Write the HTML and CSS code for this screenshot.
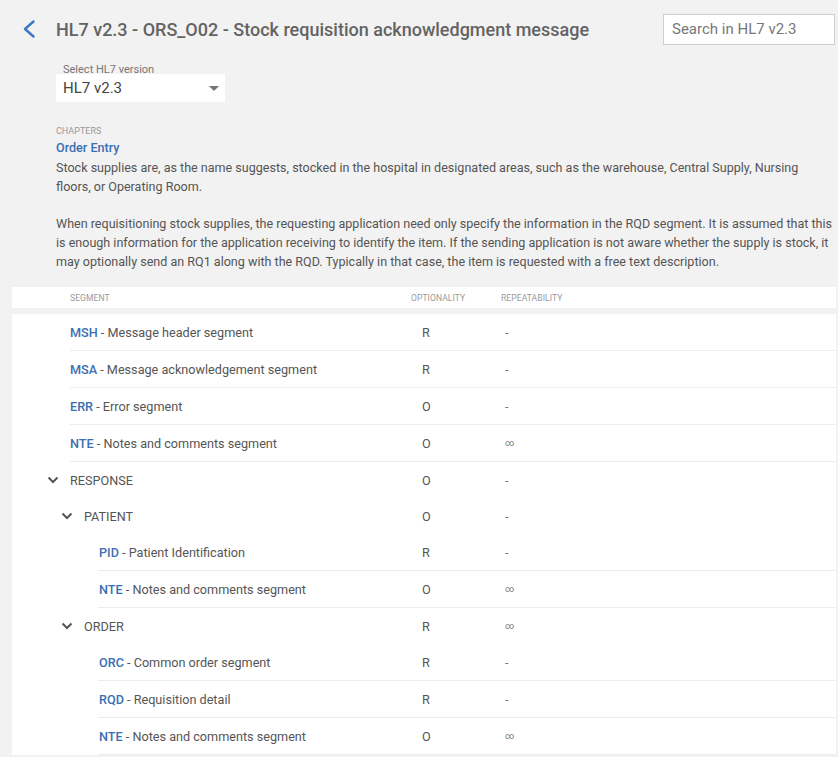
FILE: index.html
```html
<!DOCTYPE html>
<html lang="en">
<head>
<meta charset="utf-8">
<title>HL7 v2.3 - ORS_O02</title>
<link rel="stylesheet" href="styles.css">
</head>
<body>
<header class="topbar">
  <a class="back" href="#" aria-label="Back">
    <svg width="14" height="18" viewBox="0 0 14 18"><polyline points="11.5,1.5 3,9 11.5,16.5" fill="none" stroke="#3b78bf" stroke-width="2.4" stroke-linecap="round" stroke-linejoin="round"/></svg>
  </a>
  <h1 class="title">HL7 v2.3 - ORS_O02 - Stock requisition acknowledgment message</h1>
  <div class="search">Search in HL7 v2.3</div>
</header>

<section class="content">
  <div class="version">
    <div class="version-label">Select HL7 version</div>
    <div class="version-select">
      <span>HL7 v2.3</span>
      <svg class="caret" width="10" height="5" viewBox="0 0 10 5"><polygon points="0,0 10,0 5,5" fill="#757575"/></svg>
    </div>
  </div>

  <div class="chapters-label">CHAPTERS</div>
  <div class="chapter">Order Entry</div>
  <p class="desc">Stock supplies are, as the name suggests, stocked in the hospital in designated areas, such as the warehouse, Central Supply, Nursing floors, or Operating Room.</p>
  <p class="desc gap">When requisitioning stock supplies, the requesting application need only specify the information in the RQD segment. It is assumed that this is enough information for the application receiving to identify the item. If the sending application is not aware whether the supply is stock, it may optionally send an RQ1 along with the RQD. Typically in that case, the item is requested with a free text description.</p>
</section>

<div class="table">
  <div class="thead">
    <div class="th th-seg">SEGMENT</div>
    <div class="th th-opt">OPTIONALITY</div>
    <div class="th th-rep">REPEATABILITY</div>
  </div>
  <div class="tbody">
    <div class="row seg l1"><div class="c-seg"><b>MSH</b> - Message header segment</div><div class="c-opt">R</div><div class="c-rep">-</div></div>
    <div class="row seg l1"><div class="c-seg"><b>MSA</b> - Message acknowledgement segment</div><div class="c-opt">R</div><div class="c-rep">-</div></div>
    <div class="row seg l1"><div class="c-seg"><b>ERR</b> - Error segment</div><div class="c-opt">O</div><div class="c-rep">-</div></div>
    <div class="row seg l1"><div class="c-seg"><b>NTE</b> - Notes and comments segment</div><div class="c-opt">O</div><div class="c-rep inf">∞</div></div>

    <div class="row grp g1"><div class="c-seg"><span class="chev"><svg width="12" height="8" viewBox="0 0 12 8"><polyline points="1.5,1.5 6,6 10.5,1.5" fill="none" stroke="#555" stroke-width="2"/></svg></span>RESPONSE</div><div class="c-opt">O</div><div class="c-rep">-</div></div>
    <div class="row grp g2"><div class="c-seg"><span class="chev"><svg width="12" height="8" viewBox="0 0 12 8"><polyline points="1.5,1.5 6,6 10.5,1.5" fill="none" stroke="#555" stroke-width="2"/></svg></span>PATIENT</div><div class="c-opt">O</div><div class="c-rep">-</div></div>
    <div class="row seg l3"><div class="c-seg"><b>PID</b> - Patient Identification</div><div class="c-opt">R</div><div class="c-rep">-</div></div>
    <div class="row seg l3"><div class="c-seg"><b>NTE</b> - Notes and comments segment</div><div class="c-opt">O</div><div class="c-rep inf">∞</div></div>
    <div class="row grp g2"><div class="c-seg"><span class="chev"><svg width="12" height="8" viewBox="0 0 12 8"><polyline points="1.5,1.5 6,6 10.5,1.5" fill="none" stroke="#555" stroke-width="2"/></svg></span>ORDER</div><div class="c-opt">R</div><div class="c-rep inf">∞</div></div>
    <div class="row seg l3"><div class="c-seg"><b>ORC</b> - Common order segment</div><div class="c-opt">R</div><div class="c-rep">-</div></div>
    <div class="row seg l3"><div class="c-seg"><b>RQD</b> - Requisition detail</div><div class="c-opt">R</div><div class="c-rep">-</div></div>
    <div class="row seg l3"><div class="c-seg"><b>NTE</b> - Notes and comments segment</div><div class="c-opt">O</div><div class="c-rep inf">∞</div></div>
  </div>
</div>
</body>
</html>
```
FILE: styles.css
```css
html, body {
  margin: 0;
  padding: 0;
  background: #f2f2f2;
  font-family: Roboto, "Liberation Sans", Arial, sans-serif;
  color: #555;
}

.topbar {
  display: flex;
  align-items: flex-start;
  padding: 14px 3px 0 22px;
  height: 50px;
  box-sizing: border-box;
}

.back {
  display: flex;
  width: 14px;
  height: 18px;
  margin-top: 6px;
}

.title {
  margin: 0 0 0 20px;
  font-size: 18px;
  font-weight: 500;
  line-height: 31px;
  color: #636363;
  flex: 1;
  white-space: nowrap;
}

.search {
  width: 172px;
  height: 31px;
  box-sizing: border-box;
  background: #fff;
  border: 1px solid #cfcfcf;
  padding: 0 8px;
  font-size: 15px;
  line-height: 29px;
  color: #777;
}

.content {
  padding: 14px 2px 0 56px;
}

.version-label {
  font-size: 11px;
  line-height: 12px;
  margin-bottom: -2px;
  color: #777;
  padding-left: 7px;
}

.version-select {
  width: 169px;
  height: 28px;
  box-sizing: border-box;
  background: #fff;
  display: flex;
  align-items: center;
  justify-content: space-between;
  padding: 0 6px 0 7px;
  font-size: 15px;
  color: #444;
}

.caret {
  margin-top: 1px;
}

.chapters-label {
  margin-top: 23px;
  font-size: 9px;
  line-height: 12px;
  color: #999;
}

.chapter {
  margin-top: 1px;
  font-size: 12.6px;
  font-weight: 500;
  line-height: 20px;
  color: #3b6fb3;
}

.desc {
  margin: 0;
  font-size: 12.55px;
  line-height: 19px;
  color: #555;
}

.desc.gap {
  margin-top: 18px;
}

.table {
  margin: 16px 2px 0 12px;
}

.thead {
  display: flex;
  background: #fff;
  height: 21px;
  align-items: center;
}

.th {
  font-size: 8.5px;
  color: #999;
  letter-spacing: 0.1px;
}

.th-seg {
  padding-left: 58px;
  width: 341px;
}

.th-opt {
  width: 90px;
}

.tbody {
  margin-top: 6px;
  background: #fff;
}

.row {
  --x: 58px;
  display: grid;
  grid-template-columns: calc(399px - var(--x)) 90px 1fr;
  align-items: center;
  height: 36px;
  margin-left: var(--x);
  font-size: 12.65px;
  color: #555;
}

.row.seg {
  border-bottom: 1px solid #ececec;
}

.row.l1 { --x: 58px; }
.row.l3 { --x: 86px; }
.row.l3 .c-seg { padding-left: 1px; }
.row.g1 { --x: 32px; }
.row.g2 { --x: 46px; }

.c-seg {
  display: flex;
  align-items: center;
  white-space: pre;
}

.c-seg b {
  font-weight: 500;
  color: #3b6fb3;
}

.chev {
  display: flex;
  width: 26px;
  box-sizing: border-box;
  padding-left: 3px;
}

.c-opt {
  padding-left: 11px;
}

.c-rep {
  padding-left: 4px;
  color: #777;
}

.c-rep.inf {
  font-size: 9px;
}
```
